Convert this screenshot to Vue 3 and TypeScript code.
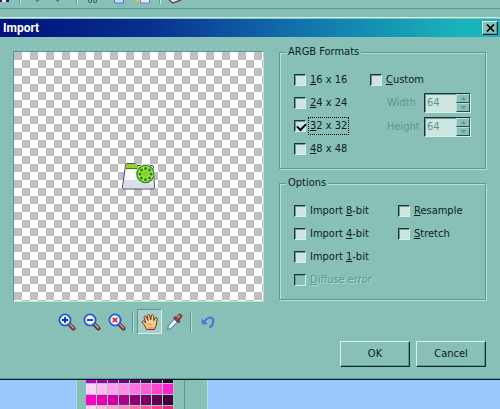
<script setup lang="ts">
import { reactive, ref } from 'vue'

interface CheckItem {
  id: string
  before: string
  key: string
  after: string
  checked: boolean
  disabled?: boolean
}

const sizes = reactive<CheckItem[]>([
  { id: 's16', before: '', key: '1', after: '6 x 16', checked: false },
  { id: 's24', before: '', key: '2', after: '4 x 24', checked: false },
  { id: 's32', before: '', key: '3', after: '2 x 32', checked: true },
  { id: 's48', before: '', key: '4', after: '8 x 48', checked: false },
])
const depths = reactive<CheckItem[]>([
  { id: 'b8', before: 'Import ', key: '8', after: '-bit', checked: false },
  { id: 'b4', before: 'Import ', key: '4', after: '-bit', checked: false },
  { id: 'b1', before: 'Import ', key: '1', after: '-bit', checked: false },
  { id: 'diffuse', before: '', key: 'D', after: 'iffuse error', checked: false, disabled: true },
])
const scaling = reactive<CheckItem[]>([
  { id: 'resample', before: '', key: 'R', after: 'esample', checked: false },
  { id: 'stretch', before: '', key: 'S', after: 'tretch', checked: false },
])
const focused = ref('s32')
const custom = ref(false)
const dims = reactive([
  { id: 'width', label: 'Width', value: '64' },
  { id: 'height', label: 'Height', value: '64' },
])
const zoomTools = ['in', 'out', 'reset']
const palette = [
  '#b800c8', '#a000b0', '#900098', '#780080', '#680070', '#580060', '#480050', '#380040',
  '#ffd4f8', '#ffbcf0', '#ffa4ec', '#ff8ce6', '#ff74e0', '#ff5cda', '#ff44d4', '#ff22cc',
  '#ff00c8', '#e800b4', '#d000a4', '#b00090', '#900078', '#780064', '#600050', '#48003c',
  '#ffd4e4', '#ffbcd4', '#ffa4c8', '#ff8cb8', '#ff74a8', '#ff5c98', '#ff4488', '#e82a78',
]
</script>

<template>
  <div class="desktop">
    <header class="app-bar">
      <svg class="bar-icons" width="190" height="8" viewBox="0 0 190 8" aria-hidden="true">
        <path d="M0 0h9v2H0z" fill="#24206c" /><path d="M2 0h4v2H2z" fill="#e8e8f4" />
        <path d="M19.500 0v4M76.500 0v4M159.500 0v4" stroke="#5c9c94" />
        <path d="M20.500 0v4M77.500 0v4M160.500 0v4" stroke="#c8e6e0" />
        <path d="M36 1l3-1M56 0l3 1" stroke="#4c8880" stroke-width="2" />
        <circle cx="90" cy="1" r="1.600" fill="none" stroke="#3c5c70" /><circle cx="95" cy="1" r="1.600" fill="none" stroke="#3c5c70" />
        <path d="M114.500-2h9v5h-9z" fill="#c4dcff" stroke="#5474d0" />
        <path d="M136-2h8v4h-8z" fill="#e8b840" /><path d="M140.500-2h9v5h-9z" fill="#dce8ff" stroke="#6c84cc" />
        <path d="M169 0l4 3 8-3" fill="#f0ece8" stroke="#544c50" stroke-width="1.500" />
      </svg>
    </header>

    <main class="dialog">
      <div class="title-bar">
        <h1>Import</h1>
        <button class="close" type="button" aria-label="Close">
          <svg width="9" height="8" viewBox="0 0 9 8"><path d="M1 .5l7 7M8 .5l-7 7" stroke="#000" stroke-width="1.700" /></svg>
        </button>
      </div>

      <div class="content">
        <section class="preview-pane">
          <div class="preview">
            <svg width="34" height="30" viewBox="0 0 34 30" aria-hidden="true">
              <defs>
                <clipPath id="folder-edge"><path d="M0 0h32v30H0z" /></clipPath>
              </defs>
              <path d="M3.500 3Q3.500 1.500 5 1.500h8l2 2h15Q31.500 3.500 31.500 5v5l1 15q0 2-2 2h-28q-2 0-2-2z" fill="#eef1f4" stroke="#4c4c6c" />
              <path d="M4 5V3q0-1 1-1h8l2 2h15v2H4z" fill="#96d020" />
              <path d="M4 6.500h27" stroke="#437a20" />
              <path d="M4 8h27l1 10H3z" fill="#fff" opacity=".7" />
              <path d="M2 18h20l9 5v3H2z" fill="#cdd2d8" opacity=".6" />
              <g clip-path="url(#folder-edge)">
                <circle cx="23.500" cy="12" r="9.800" fill="#e4f8d0" />
                <circle cx="23.500" cy="12" r="8.600" fill="#a0e840" stroke="#34902c" stroke-width="1.400" />
                <g fill="#2c7c28">
                  <circle cx="23.500" cy="6.500" r="1.500" /><circle cx="19.500" cy="8" r="1.500" />
                  <circle cx="18" cy="12" r="1.500" /><circle cx="19.500" cy="16" r="1.500" />
                  <circle cx="23.500" cy="17.500" r="1.500" /><circle cx="27.500" cy="16" r="1.500" />
                  <circle cx="29" cy="12" r="1.500" /><circle cx="27.500" cy="8" r="1.500" />
                </g>
                <circle cx="23.500" cy="12" r="3" fill="#7cd030" />
              </g>
            </svg>
          </div>
          <div class="tools">
            <button v-for="tool in zoomTools" :key="tool" class="tool" type="button" :aria-label="'Zoom ' + tool">
              <svg width="18" height="18" viewBox="0 0 18 18">
                <path d="M11.500 11.500l4 4" stroke="#5c3434" stroke-width="4" stroke-linecap="round" />
                <path d="M11.500 11l4 4" stroke="#d89c94" stroke-width="1.500" stroke-linecap="round" />
                <circle cx="7" cy="7" r="5.600" fill="#eaf4ff" stroke="#2858d8" stroke-width="1.800" />
                <path v-if="tool === 'in'" d="M4 7h6M7 4v6" stroke="#1030b0" stroke-width="1.800" />
                <path v-else-if="tool === 'out'" d="M4 7h6" stroke="#1030b0" stroke-width="1.800" />
                <path v-else d="M4.800 4.800l4.400 4.400M9.200 4.800L4.800 9.200" stroke="#d82838" stroke-width="1.700" />
              </svg>
            </button>
            <span class="separator"></span>
            <button class="tool pressed" type="button" aria-label="Pan" aria-pressed="true">
              <svg width="18" height="18" viewBox="0 0 18 18">
                <path d="M5.500 16.500L4 13 1.300 9.500Q.8 7.800 2.500 8L5 10 3 4.500Q3 2.600 4.800 3.300L7 7.500 6.300 2.500Q7.200 .5 8.600 2.200L9.700 7 10.500 2Q12 .8 12.700 2.500V7.800L14.600 4.500Q16.300 4 16.200 5.900L15.300 12 13.500 16.500z" fill="#fcc888" stroke="#683c20" />
                <path d="M5.500 7l1 3M8.500 6.500v3M11 7v2.500" stroke="#ffe8c4" />
                <path d="M6 11.500q3-2 5 1M7 15h6" stroke="#d88848" fill="none" />
              </svg>
            </button>
            <button class="tool" type="button" aria-label="Pick colour">
              <svg width="18" height="18" viewBox="0 0 18 18">
                <path d="M1.500 16.500l1-4L8.500 6l3 3-6.500 6.500z" fill="#d4ecff" stroke="#4c7490" />
                <path d="M3.500 14l5.500-6" stroke="#fff" stroke-width="1.500" />
                <path d="M7.500 5l5 5 1.500-1.500-1-1.500 2.500-2.500Q16.500 2.500 15 1.500T12 2l-1.700 2.500L9 3.500z" fill="#a43c44" stroke="#542430" stroke-width=".8" />
                <path d="M11.500 4.500l2-2" stroke="#f0a8a8" stroke-width="1.500" />
              </svg>
            </button>
            <span class="separator"></span>
            <button class="tool" type="button" aria-label="Undo">
              <svg width="18" height="18" viewBox="0 0 18 18">
                <path d="M5 9Q8 4.500 12 4.500Q15 5.500 14 9.500Q13.500 13 10.500 14.500" fill="none" stroke="#4878d8" stroke-width="2.200" />
                <path d="M2.500 5.500l.5 6 6-.500z" fill="#4878d8" />
              </svg>
            </button>
          </div>
        </section>

        <form class="settings" @submit.prevent>
          <fieldset>
            <legend>ARGB Formats</legend>
            <div class="formats">
              <div class="checks">
                <label v-for="item in sizes" :key="item.id" class="check">
                  <input v-model="item.checked" type="checkbox" @focus="focused = item.id" />
                  <span :class="{ focus: focused === item.id }">{{ item.before }}<u>{{ item.key }}</u>{{ item.after }}</span>
                </label>
              </div>
              <div class="custom">
                <label class="check"><input v-model="custom" type="checkbox" /><span><u>C</u>ustom</span></label>
                <div v-for="dim in dims" :key="dim.id" class="dimension">
                  <label :for="dim.id">{{ dim.label }}</label>
                  <div class="spinner">
                    <input :id="dim.id" v-model="dim.value" type="text" :disabled="!custom" />
                    <div class="steps">
                      <button type="button" :disabled="!custom" :aria-label="'Increase ' + dim.label"><svg width="5" height="3" viewBox="0 0 5 3"><path d="M0 3l2.500-3L5 3z" fill="#5a958c" /></svg></button>
                      <button type="button" :disabled="!custom" :aria-label="'Decrease ' + dim.label"><svg width="5" height="3" viewBox="0 0 5 3"><path d="M0 0l2.500 3L5 0z" fill="#5a958c" /></svg></button>
                    </div>
                  </div>
                </div>
              </div>
            </div>
          </fieldset>

          <fieldset>
            <legend>Options</legend>
            <div class="options">
              <div v-for="(group, i) in [depths, scaling]" :key="i" class="checks">
                <label v-for="item in group" :key="item.id" class="check" :class="{ off: item.disabled }">
                  <input v-model="item.checked" type="checkbox" :disabled="item.disabled" />
                  <span>{{ item.before }}<u>{{ item.key }}</u>{{ item.after }}</span>
                </label>
              </div>
            </div>
          </fieldset>
        </form>
      </div>

      <footer class="actions">
        <button type="button">OK</button>
        <button type="button">Cancel</button>
      </footer>
    </main>

    <aside class="palette-panel">
      <div class="swatches">
        <i v-for="(color, i) in palette" :key="i" :style="{ background: color }"></i>
      </div>
    </aside>
  </div>
</template>

<style>
body {
  margin: 0;
}
</style>

<style scoped>
.desktop {
  --face: #88c0b8;
  --light: #b8e0d8;
  --shade: #589890;
  --field: #cde5df;
  display: flex;
  flex-direction: column;
  height: 100vh;
  overflow: hidden;
  background: #98c8fc;
  color: #0c1c1c;
  font: 11px/14px "DejaVu Sans Condensed", "DejaVu Sans", sans-serif;
}
.desktop * {
  box-sizing: border-box;
}
svg {
  display: block;
}
button {
  display: flex;
  align-items: center;
  justify-content: center;
  padding: 0;
  border: 0;
  background: var(--face);
  color: inherit;
  font: inherit;
}
u {
  text-underline-offset: 1px;
}
.app-bar {
  flex: none;
  height: 17px;
  background: linear-gradient(var(--shade), var(--shade)) 0 8px / 100% 1px no-repeat var(--face);
}
.dialog {
  flex: none;
  border-top: 1px solid #c8f0e4;
  border-bottom: 1px solid #081c30;
  box-shadow: inset 0 -1px #609890;
  background: var(--face);
}
.title-bar {
  display: flex;
  align-items: center;
  justify-content: space-between;
  height: 18px;
  margin-top: 1px;
  padding: 0 2px 0 3px;
  background: linear-gradient(90deg, #00107c, #083090 30%, #1068a8 55%, #18b4bc 92%);
}
h1 {
  margin: 0;
  color: #fff;
  font: bold 12px/18px Roboto, "Liberation Sans", sans-serif;
}
.close {
  width: 16px;
  height: 14px;
  border: 1px solid;
  border-color: #e0f4f0 #102828 #102828 #e0f4f0;
  box-shadow: inset -1px -1px var(--shade);
}
.content {
  display: grid;
  grid-template-columns: minmax(0, 1fr) 207px;
  gap: 15px;
  padding: 14px 14px 0 13px;
}
.preview {
  display: grid;
  place-items: center;
  aspect-ratio: 1;
  border: 1px solid;
  border-color: var(--shade) var(--light) var(--light) var(--shade);
  background: conic-gradient(#fff 25%, #c0c0c0 0 50%, #fff 0 75%, #c0c0c0 0) 0 0 / 16px 16px;
}
.tools {
  display: flex;
  align-items: center;
  justify-content: center;
  margin-top: 7px;
  padding-right: 3px;
}
.tool {
  width: 25px;
  height: 25px;
}
.pressed {
  border: 1px solid;
  border-color: var(--shade) #d4f0ea #d4f0ea var(--shade);
  background: #a4d0c9;
}
.separator {
  width: 2px;
  height: 20px;
  margin: 0 3px;
  border-left: 1px solid var(--shade);
  border-right: 1px solid var(--light);
}
.settings {
  display: flex;
  flex-direction: column;
  gap: 7px;
  margin-top: -6px;
}
fieldset {
  min-width: 0;
  margin: 0;
  padding: 9px 14px 8px;
  border: 1px solid var(--shade);
  box-shadow: 1px 1px var(--light), inset 1px 1px var(--light);
}
legend {
  margin-left: -8px;
  padding: 0 2px;
  background: var(--face);
}
.formats {
  display: grid;
  grid-template-columns: 76px 1fr;
}
.options {
  display: grid;
  grid-template-columns: 104px 1fr;
}
.check {
  display: flex;
  align-items: center;
  gap: 2px;
  height: 23px;
  white-space: nowrap;
}
.check input {
  appearance: none;
  flex: none;
  width: 12px;
  height: 12px;
  margin: 0;
  border: 1px solid;
  border-color: #183434 #d4f0ea #d4f0ea #183434;
  outline: 0;
  background: var(--field);
  box-shadow: inset 1px 1px #6c9c94;
}
.check input:checked::after {
  content: "";
  display: block;
  width: 7px;
  height: 4px;
  margin: 2px;
  border: solid #000;
  border-width: 0 0 2px 2px;
  transform: rotate(-45deg);
}
.check input:disabled {
  background: var(--face);
}
.check span {
  padding: 1px;
  border: 1px dotted transparent;
}
.check .focus {
  border-color: #000;
}
.off {
  color: var(--shade);
  text-shadow: 1px 1px #b0dcd4;
}
.dimension {
  display: flex;
  align-items: center;
  justify-content: space-between;
  height: 24px;
  padding-left: 17px;
  color: var(--shade);
}
.spinner {
  display: flex;
  width: 47px;
  height: 20px;
  border: 1px solid;
  border-color: #183434 #d4f0ea #d4f0ea #183434;
  background: var(--field);
  box-shadow: inset 1px 1px #6c9c94;
}
.spinner input {
  flex: 1;
  min-width: 0;
  padding: 0 0 0 2px;
  border: 0;
  background: none;
  color: var(--shade);
  font: inherit;
}
.steps {
  display: grid;
  width: 14px;
}
.steps button {
  border: 1px solid;
  border-color: var(--light) #284c48 #284c48 var(--light);
}
.actions {
  display: flex;
  justify-content: flex-end;
  gap: 6px;
  padding: 7px 14px 12px;
}
.actions button {
  width: 70px;
  height: 26px;
  border: 1px solid;
  border-color: #dcf4ee #102828 #102828 #dcf4ee;
  box-shadow: inset -1px -1px var(--shade);
}
.palette-panel {
  flex: 1;
  min-height: 0;
  width: 132px;
  margin-left: 76px;
  padding-left: 9px;
  overflow: hidden;
  border: solid var(--light);
  border-width: 0 1px;
  background: linear-gradient(var(--shade), var(--shade)) 107px 0 / 1px 100% no-repeat var(--face);
}
.swatches {
  display: grid;
  grid-template-columns: repeat(8, 10px);
  grid-auto-rows: 10px;
  gap: 1px;
  width: 88px;
  margin-top: -7px;
  background: #a8c8c0;
}
</style>
